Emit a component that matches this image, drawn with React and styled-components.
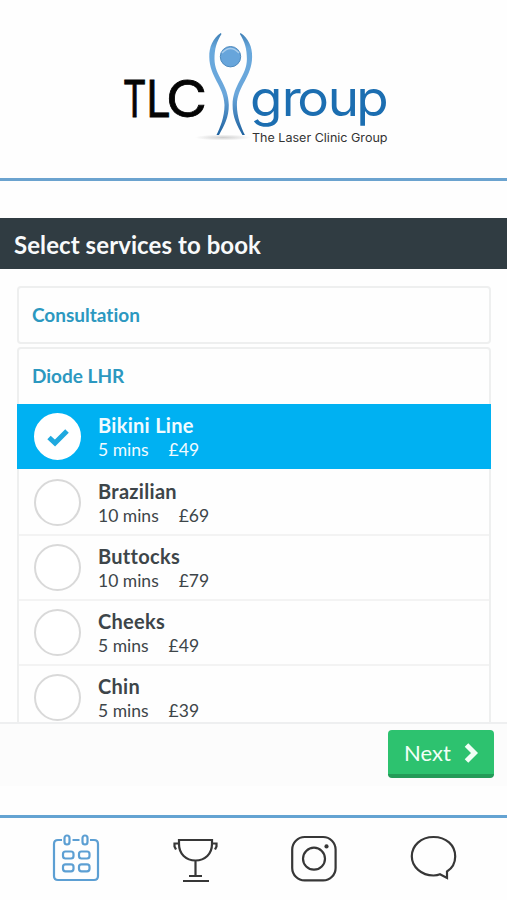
import React, { useState } from "react";
import styled, { createGlobalStyle } from "styled-components";

const GlobalStyle = createGlobalStyle`
  * {
    box-sizing: border-box;
  }
  body {
    margin: 0;
    background-color: #fefefe;
    font-family: Lato, "Liberation Sans", sans-serif;
    font-variant-ligatures: none;
    color: #3d4549;
  }
`;

const Wrapper = styled.div`
  width: 100%;
  max-width: 507px;
  height: 900px;
  display: flex;
  flex-direction: column;
  overflow: hidden;
`;

const Header = styled.header`
  height: 181px;
  flex: none;
  border-bottom: 3px solid #6ba3cf;

  svg {
    display: block;
  }
`;

const Title = styled.h1`
  flex: none;
  height: 51px;
  margin: 37px 0 0;
  padding: 0 14px;
  background-color: #303c42;
  color: #f8fafb;
  font-size: 24px;
  line-height: 53px;
  font-weight: 700;
  letter-spacing: 0.08px;
`;

const Services = styled.main`
  flex: none;
  height: 453px;
  padding: 17px 16px 0 17px;
  overflow: hidden;
`;

const Group = styled.section`
  border: 2px solid #eeefef;
  border-radius: 4px;
  margin-bottom: 3px;
`;

const GroupName = styled.h2`
  margin: 0;
  height: ${props => (props.$open ? "55px" : "54px")};
  padding: 0 13px;
  color: #2c98c0;
  font-size: 19px;
  line-height: 54px;
  font-weight: 700;
`;

const ServiceRow = styled.div`
  display: flex;
  align-items: center;
  height: 65px;
  margin: ${props => (props.$selected ? "0 -2px 2px" : "0")};
  padding: ${props => (props.$selected ? "0 17px" : "0 15px")};
  border-bottom: ${props => (props.$selected ? "none" : "2px solid #f3f3f3")};
  background-color: ${props => (props.$selected ? "#00b1f2" : "transparent")};
  color: ${props => (props.$selected ? "#f1fbff" : "#3d4549")};
  cursor: pointer;
`;

const Check = styled.div`
  width: 47px;
  height: 47px;
  flex: none;
  display: flex;
  align-items: center;
  justify-content: center;
  border: 2px solid ${props => (props.$selected ? "#fff" : "#d9d9d9")};
  border-radius: 50%;
  background-color: #fff;
`;

const Info = styled.div`
  margin-left: 17px;
  padding-top: 2px;
`;

const ServiceName = styled.div`
  font-size: 20px;
  line-height: 24px;
  font-weight: 700;
  letter-spacing: 0.3px;
`;

const Details = styled.div`
  display: flex;
  gap: 20px;
  font-size: 17.5px;
  line-height: 25px;
`;

const Actions = styled.div`
  flex: none;
  height: 64px;
  display: flex;
  justify-content: flex-end;
  padding: 6px 13px 0 0;
  border-top: 2px solid #eeeff0;
  background-color: #fcfcfc;
`;

const NextBtn = styled.button`
  width: 106px;
  height: 48px;
  display: flex;
  align-items: center;
  justify-content: space-between;
  padding: 1px 16px 0 16px;
  border: none;
  border-bottom: 4px solid #249b58;
  border-radius: 4px;
  background-color: #2dc26f;
  color: #f2fff7;
  font-family: inherit;
  font-size: 22px;
  cursor: pointer;
`;

const TabBar = styled.nav`
  height: 85px;
  flex: none;
  margin-top: 29px;
  display: flex;
  border-top: 3px solid #64a3d2;
  padding: 0 14px 0 16px;
`;

const Tab = styled.a`
  flex: 1;
  display: flex;
  justify-content: center;
  padding-top: 14px;
  color: ${props => (props.$active ? "#5c9fd3" : "#373737")};

  svg {
    fill: none;
    stroke: currentColor;
    stroke-width: 2.2;
  }
`;

const LogoText = styled.text`
  font-family: Inter, "Liberation Sans", sans-serif;
  font-size: ${props => props.$size}px;
`;

const services = [
  { name: "Bikini Line", time: "5 mins", price: "£49" },
  { name: "Brazilian", time: "10 mins", price: "£69" },
  { name: "Buttocks", time: "10 mins", price: "£79" },
  { name: "Cheeks", time: "5 mins", price: "£49" },
  { name: "Chin", time: "5 mins", price: "£39" },
];

const BODY =
  "M220.8 33 C213 38 209 47 209.3 57 C209.5 77 224 86 224.5 105 C224.5 117 220 128 216.5 135 L219 135 C224 126 229 117 228.8 105 C228.5 84 214.5 76 214.5 59 C214.5 49 216.5 42 221.5 34 Z";

// x is the left edge on the page, scale squeezes or widens the glyph
const letters = [
  { char: "T", x: 122.8, scale: 0.72 },
  { char: "L", x: 146.2, scale: 0.85 },
  { char: "C", x: 166, scale: 1.1 },
];

function Logo() {
  return (
    <svg width="507" height="178" viewBox="0 0 507 178">
      <defs>
        <linearGradient id="body" x1="0" y1="0" x2="0" y2="1">
          <stop offset="0" stopColor="#3f7fb5" />
          <stop offset="0.15" stopColor="#68a8dc" />
          <stop offset="0.6" stopColor="#6ba7db" />
          <stop offset="1" stopColor="#1d619f" />
        </linearGradient>
        <radialGradient id="shade">
          <stop offset="0" stopColor="#cfcfcf" />
          <stop offset="1" stopColor="#fefefe" />
        </radialGradient>
      </defs>
      <ellipse cx="223" cy="137.5" rx="28" ry="3" fill="url(#shade)" />
      <path d={BODY} fill="url(#body)" />
      <path d={BODY} fill="url(#body)" transform="translate(461.4 0) scale(-1 1)" />
      <circle cx="230.5" cy="56.7" r="10.2" fill="#67a5db" stroke="#4d89bd" />
      <path d="M222 53 Q230.5 44 239 53" fill="none" stroke="#a9cdec" strokeWidth="1.4" />
      {letters.map((l) => (
        <LogoText
          key={l.char}
          $size={51}
          transform={`translate(${l.x} 116.5) scale(${l.scale} 1)`}
          fill="#050505"
          stroke="#050505"
          strokeWidth="0.8"
        >
          {l.char}
        </LogoText>
      ))}
      <LogoText $size={50} x="235.9 265.8 280.4 309.2 336" y="116.5" transform="scale(1.06 1)" fill="#1c6eb1">
        group
      </LogoText>
      <LogoText $size={11.5} x="252" y="142" textLength="135.5" lengthAdjust="spacingAndGlyphs" fill="#333">
        The Laser Clinic Group
      </LogoText>
    </svg>
  );
}

function App() {
  const [selected, setSelected] = useState("Bikini Line");

  return (
    <Wrapper>
      <GlobalStyle />
      <Header>
        <Logo />
      </Header>
      <Title>Select services to book</Title>
      <Services>
        <Group>
          <GroupName>Consultation</GroupName>
        </Group>
        <Group>
          <GroupName $open>Diode LHR</GroupName>
          {services.map((data) => {
            const on = data.name === selected;
            return (
              <ServiceRow key={data.name} $selected={on} onClick={() => setSelected(data.name)}>
                <Check $selected={on}>
                  {on && (
                    <svg width="24" height="20" viewBox="0 0 24 20">
                      <path d="M3 10.5 L9 16 L21 4" fill="none" stroke="#1fa9df" strokeWidth="5" />
                    </svg>
                  )}
                </Check>
                <Info>
                  <ServiceName>{data.name}</ServiceName>
                  <Details>
                    <span>{data.time}</span>
                    <span>{data.price}</span>
                  </Details>
                </Info>
              </ServiceRow>
            );
          })}
        </Group>
      </Services>
      <Actions>
        <NextBtn>
          Next
          <svg width="14" height="20" viewBox="0 0 14 20">
            <path d="M2.5 2 L10.5 10 L2.5 18" fill="none" stroke="currentColor" strokeWidth="5" />
          </svg>
        </NextBtn>
      </Actions>
      <TabBar>
        <Tab $active>
          <svg width="48" height="52" viewBox="0 0 48 52">
            <path d="M10 8 H6 Q2 8 2 12 V44 Q2 48 6 48 H42 Q46 48 46 44 V12 Q46 8 42 8 H38 M20.5 8 H27.5" />
            <rect x="12.5" y="3.5" width="5" height="9" rx="2.5" />
            <rect x="30.5" y="3.5" width="5" height="9" rx="2.5" />
            <rect x="11" y="19.5" width="10.5" height="7" rx="2.5" />
            <rect x="27" y="19.5" width="10.5" height="7" rx="2.5" />
            <rect x="11" y="32.3" width="10.5" height="7" rx="2.5" />
            <rect x="27" y="32.3" width="10.5" height="7" rx="2.5" />
          </svg>
        </Tab>
        <Tab>
          <svg width="48" height="52" viewBox="0 0 48 52">
            <path d="M8 8 H41 V12 C41 22 34 28.5 24.5 28.5 C15 28.5 8 22 8 12 Z M8 11.5 H3.5 V14.5 L5 17.5 M41 11.5 H45.5 V14.5 L44 17.5 M24.5 28.5 V44 M18 44 H31 M12 49 H38" />
          </svg>
        </Tab>
        <Tab>
          <svg width="48" height="52" viewBox="0 0 48 52">
            <rect x="2.2" y="5" width="43.4" height="43.4" rx="12.5" />
            <circle cx="24" cy="26.7" r="11" />
            <circle cx="36.5" cy="14.4" r="2.1" fill="currentColor" stroke="none" />
          </svg>
        </Tab>
        <Tab>
          <svg width="48" height="52" viewBox="0 0 48 52">
            <path d="M38 39.5 C43.5 36 46.2 30 46.2 24.5 C46.2 13 37 5 24.5 5 C12 5 2.8 13.5 2.8 24.3 C2.8 35 12.5 43.5 24.5 43.5 C27 43.5 29.5 43 31 42.3 L38 46 Z" />
          </svg>
        </Tab>
      </TabBar>
    </Wrapper>
  );
}

export default App;
